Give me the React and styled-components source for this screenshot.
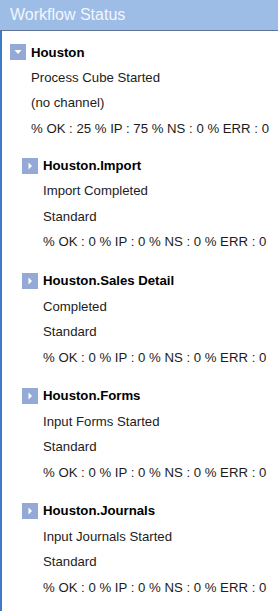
import React from "react";
import styled, { createGlobalStyle } from "styled-components";

const Global = createGlobalStyle`
  html, body { margin: 0; padding: 0; background: #ffffff; }
  body { font-family: "Liberation Sans", Arial, sans-serif; }
`;

const Panel = styled.div`
  width: 278px;
  height: 611px;
  display: flex;
  flex-direction: column;
  overflow: hidden;
  background: #ffffff;
`;

const Header = styled.div`
  flex: 0 0 auto;
  box-sizing: border-box;
  height: 31px;
  background: #9dbde6;
  border-bottom: 1px solid #5f7395;
  display: flex;
  align-items: center;
  padding: 0 0 1px 10px;
  font-size: 16px;
  color: #f2f6fc;
`;

const Body = styled.div`
  flex: 1 1 auto;
  border-left: 2px solid #3d7bc4;
  padding: 8.5px 0 0 8px;
`;

const Group = styled.div`
  display: flex;
  flex-direction: column;
  padding-left: ${(p) => (p.$nested ? 12 : 0)}px;
  margin-bottom: 13.6px;
`;

const NodeRow = styled.div`
  height: 25px;
  display: flex;
  align-items: center;
  gap: 5px;
`;

const Toggle = styled.span`
  width: 16px;
  height: 16px;
  background: #95a9d6;
  display: flex;
  align-items: center;
  justify-content: center;
  flex: 0 0 auto;
`;

const Title = styled.span`
  font-weight: bold;
  font-size: 13.2px;
  color: #000000;
`;

const Line = styled.div`
  height: 25.5px;
  display: flex;
  align-items: center;
  padding-left: 21px;
  font-size: 13.2px;
  color: #1c1c1c;
  white-space: nowrap;
`;

const ChildWrap = styled.div`
  margin-top: 12.2px;
`;

const Arrow = ({ open }) => (
  <svg width="8" height="8" viewBox="0 0 8 8">
    {open ? (
      <polygon points="0.5,2 7.5,2 4,6" fill="#ffffff" />
    ) : (
      <polygon points="2.5,0.5 6,4 2.5,7.5" fill="#ffffff" />
    )}
  </svg>
);

const Node = ({ title, lines, open, nested, children }) => (
  <Group $nested={nested}>
    <NodeRow>
      <Toggle>
        <Arrow open={open} />
      </Toggle>
      <Title>{title}</Title>
    </NodeRow>
    {lines.map((l, i) => (
      <Line key={i}>{l}</Line>
    ))}
    {children && <ChildWrap>{children}</ChildWrap>}
  </Group>
);

const zero = "% OK : 0 % IP : 0 % NS : 0 % ERR : 0";

const children = [
  { title: "Houston.Import", status: "Import Completed" },
  { title: "Houston.Sales Detail", status: "Completed" },
  { title: "Houston.Forms", status: "Input Forms Started" },
  { title: "Houston.Journals", status: "Input Journals Started" },
];

export default function App() {
  return (
    <>
      <Global />
      <Panel>
        <Header>Workflow Status</Header>
        <Body>
          <Node
            open
            title="Houston"
            lines={[
              "Process Cube Started",
              "(no channel)",
              "% OK : 25 % IP : 75 % NS : 0 % ERR : 0",
            ]}
          >
            {children.map((c) => (
              <Node
                key={c.title}
                nested
                title={c.title}
                lines={[c.status, "Standard", zero]}
              />
            ))}
          </Node>
        </Body>
      </Panel>
    </>
  );
}
